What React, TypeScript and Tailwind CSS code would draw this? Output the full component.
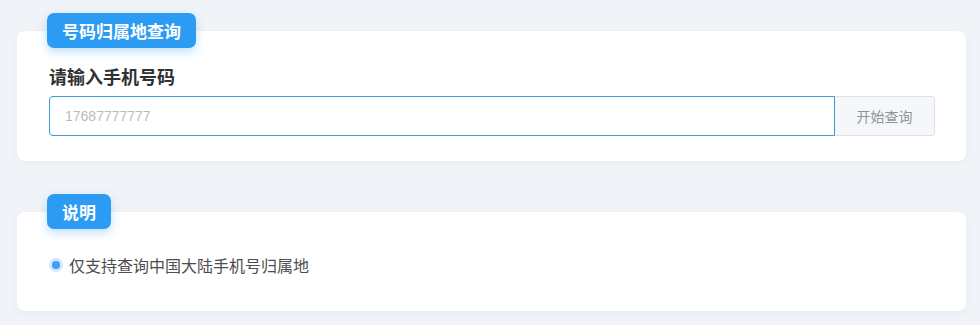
import React from "react";

const Badge = ({ text }: { text: string }) => (
  <div className="absolute -top-[18px] left-[30px] h-[35px] px-[15px] flex items-center rounded-[7px] bg-[#2b9bf4] text-white text-[17px] font-bold shadow-[0_4px_10px_rgba(43,155,244,0.3)]">
    {text}
  </div>
);

export default function App() {
  return (
    <div
      className="min-h-[325px] bg-[#f0f3f7] pt-[31px] pl-[17px] pr-[14px]"
      style={{ fontFamily: '"Noto Sans CJK SC", "Liberation Sans", sans-serif' }}
    >
      <div className="relative bg-white rounded-[8px] shadow-[0_2px_8px_rgba(0,0,0,0.04)] pl-[32px] pr-[31px] pt-[32px] pb-[25px]">
        <Badge text="号码归属地查询" />
        <div className="text-[18px] font-bold text-[#303133] leading-[26px] mb-[7px]">
          请输入手机号码
        </div>
        <div className="flex h-[40px]">
          <input
            className="flex-1 h-full border border-[#3d9ad6] rounded-l-[4px] px-[15px] text-[14px] text-[#606266] placeholder:text-[#b8bcc4] outline-none"
            style={{ fontFamily: '"Liberation Sans", sans-serif' }}
            placeholder="17687777777"
          />
          <button className="w-[100px] h-full bg-[#f5f7fa] border border-l-0 border-[#dcdfe6] rounded-r-[4px] text-[14px] text-[#909399]">
            开始查询
          </button>
        </div>
      </div>

      <div className="relative mt-[51px] bg-white rounded-[8px] shadow-[0_2px_8px_rgba(0,0,0,0.04)] px-[32px] h-[99px] flex items-center">
        <Badge text="说明" />
        <div className="flex items-center mt-[6px]">
          <span className="w-[8px] h-[8px] rounded-full bg-[#3aa0f5] ring-[3px] ring-[#cfe6fc] ml-[3px] mr-[9px]" />
          <span className="text-[16px] text-[#4d4d4d]">仅支持查询中国大陆手机号归属地</span>
        </div>
      </div>
    </div>
  );
}
